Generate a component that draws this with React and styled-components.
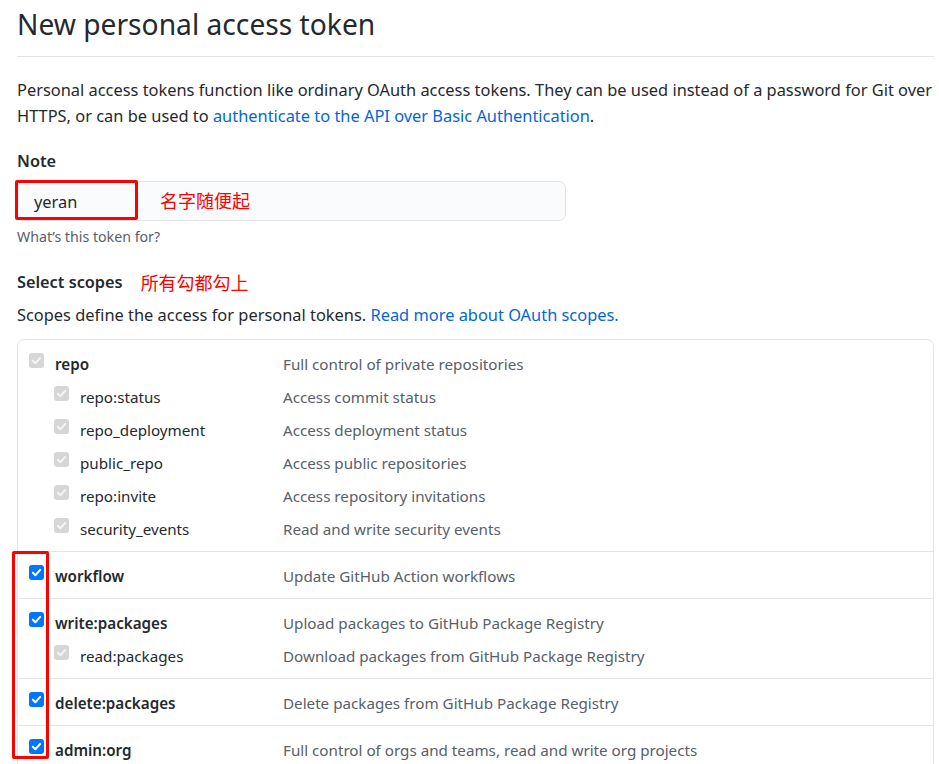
import React from "react";
import styled, { createGlobalStyle } from "styled-components";

const Global = createGlobalStyle`
  html, body { margin: 0; padding: 0; background: #fff; }
  body {
    font-family: "Segoe UI", "Noto Sans", "Liberation Sans", "Noto Sans CJK SC", sans-serif;
    color: #24292e;
  }
`;

const Page = styled.div`
  position: relative;
  width: 917px;
  padding: 0 0 0 17px;
  height: 764px;
  overflow: hidden;
`;

const Subhead = styled.div`
  padding-top: 5px;
  padding-bottom: 13px;
  border-bottom: 1px solid #e1e4e8;
`;

const Title = styled.h1`
  margin: 0;
  font-size: 28.2px;
  font-weight: 400;
  line-height: 38px;
  color: #24292e;
`;

const Lead = styled.p`
  margin: 20px 0 0;
  font-size: 16.4px;
  line-height: 26px;
`;

const Link = styled.a`
  color: #0366d6;
  text-decoration: none;
`;

const Label = styled.div`
  margin-top: ${(p) => p.$mt}px;
  display: flex;
  align-items: center;
  gap: 18px;
  font-size: 16.3px;
  font-weight: 600;
  line-height: 26px;
`;

const Annotation = styled.span`
  color: #ff0000;
  font-family: "Noto Sans CJK SC", sans-serif;
  font-weight: 400;
  font-size: 18px;
  line-height: 26px;
`;

const InputWrap = styled.div`
  position: relative;
  margin-top: 7px;
  width: 549px;
`;

const Input = styled.div`
  box-sizing: border-box;
  height: 40px;
  padding: 0 16px;
  display: flex;
  align-items: center;
  background: #fafbfc;
  border: 1px solid #e1e4e8;
  border-radius: 7px;
  font-size: 16.4px;
  color: #24292e;
`;

const InputNote = styled(Annotation)`
  position: absolute;
  left: 143px;
  top: 6px;
`;

const RedBox = styled.div`
  position: absolute;
  left: ${(p) => p.$x}px;
  top: ${(p) => p.$y}px;
  width: ${(p) => p.$w}px;
  height: ${(p) => p.$h}px;
  box-sizing: border-box;
  border: 3px solid #ff0000;
  border-radius: 2px;
  pointer-events: none;
`;

const Hint = styled.p`
  margin: 6px 0 0;
  font-size: 14.2px;
  line-height: 20px;
  color: #586069;
`;

const Text = styled.p`
  margin: 7px 0 0;
  font-size: 16.4px;
  line-height: 26px;
`;

const ScopeBox = styled.div`
  margin-top: 11px;
  border: 1px solid #e1e4e8;
  border-radius: 7px;
`;

const Group = styled.div`
  padding: 7px 0 6px;
  border-top: ${(p) => (p.$first ? "none" : "1px solid #e1e4e8")};
`;

const Row = styled.div`
  display: grid;
  grid-template-columns: ${(p) => (p.$sub ? "36px 26px 203px" : "11px 26px 228px")} 1fr;
  align-items: center;
  height: 33px;
`;

const Box = styled.span`
  grid-column: 2;
  width: 15px;
  height: 15px;
  border-radius: 3px;
  background: ${(p) => (p.$on ? "#0075ff" : "#d6d6d6")};
  display: flex;
  align-items: center;
  justify-content: center;
  margin-top: -6px;
`;

const Name = styled.span`
  grid-column: 3;
  font-size: 15.2px;
  font-weight: ${(p) => (p.$sub ? 400 : 600)};
  color: #24292e;
  white-space: nowrap;
`;

const Desc = styled.span`
  grid-column: 4;
  font-size: 15.2px;
  color: #586069;
  white-space: nowrap;
`;

const Check = ({ light }) => (
  <svg width="11" height="11" viewBox="0 0 12 12">
    <path
      d="M2 6.2 L4.8 9 L10 3.2"
      fill="none"
      stroke={light ? "#f4f4f4" : "#fff"}
      strokeWidth="2.2"
      strokeLinecap="round"
      strokeLinejoin="round"
    />
  </svg>
);

const groups = [
  [
    { name: "repo", desc: "Full control of private repositories", on: false },
    { name: "repo:status", desc: "Access commit status", sub: true },
    { name: "repo_deployment", desc: "Access deployment status", sub: true },
    { name: "public_repo", desc: "Access public repositories", sub: true },
    { name: "repo:invite", desc: "Access repository invitations", sub: true },
    { name: "security_events", desc: "Read and write security events", sub: true },
  ],
  [{ name: "workflow", desc: "Update GitHub Action workflows", on: true }],
  [
    { name: "write:packages", desc: "Upload packages to GitHub Package Registry", on: true },
    { name: "read:packages", desc: "Download packages from GitHub Package Registry", sub: true },
  ],
  [{ name: "delete:packages", desc: "Delete packages from GitHub Package Registry", on: true }],
  [{ name: "admin:org", desc: "Full control of orgs and teams, read and write org projects", on: true }],
];

export default function App() {
  return (
    <>
      <Global />
      <Page>
        <Subhead>
          <Title>New personal access token</Title>
        </Subhead>
        <Lead>
          Personal access tokens function like ordinary OAuth access tokens. They can be used instead of a password for Git over
          HTTPS, or can be used to <Link href="#">authenticate to the API over Basic Authentication</Link>.
        </Lead>
        <Label $mt={19}>Note</Label>
        <InputWrap>
          <Input>yeran</Input>
          <InputNote>名字随便起</InputNote>
        </InputWrap>
        <Hint>What’s this token for?</Hint>
        <Label $mt={22}>
          Select scopes <Annotation>所有勾都勾上</Annotation>
        </Label>
        <Text>
          Scopes define the access for personal tokens. <Link href="#">Read more about OAuth scopes.</Link>
        </Text>
        <ScopeBox>
          {groups.map((g, gi) => (
            <Group key={gi} $first={gi === 0}>
              {g.map((r) => (
                <Row key={r.name} $sub={r.sub}>
                  <Box $on={r.on}>
                    <Check light={!r.on} />
                  </Box>
                  <Name $sub={r.sub}>{r.name}</Name>
                  <Desc>{r.desc}</Desc>
                </Row>
              ))}
            </Group>
          ))}
        </ScopeBox>
        <RedBox $x={15} $y={180} $w={123} $h={40} />
        <RedBox $x={12} $y={551} $w={37} $h={208} />
      </Page>
    </>
  );
}
